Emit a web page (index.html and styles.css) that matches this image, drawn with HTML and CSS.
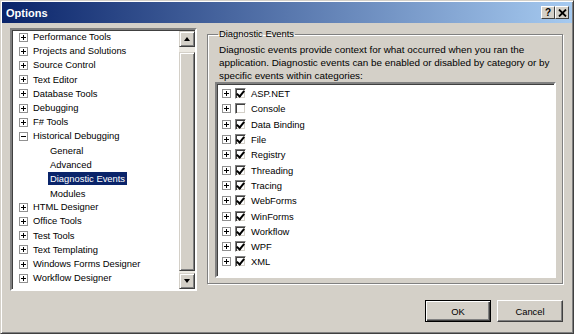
FILE: index.html
```html
<!DOCTYPE html>
<html lang="en">
<head>
    <meta charset="UTF-8">
    <title>Options</title>
    <link rel="stylesheet" href="styles.css">
</head>
<body>
<div class="window">
    <div class="titlebar">
        <span class="title">Options</span>
        <div class="caption-btns">
            <span class="cap-btn">?</span>
            <span class="cap-btn">
                <svg width="9" height="8" viewBox="0 0 9 8"><path d="M1 0.5 L8 7.5 M8 0.5 L1 7.5" stroke="#000" stroke-width="1.8"/></svg>
            </span>
        </div>
    </div>

    <div class="main">
        <div class="tree">
            <ul class="tree-items">
                <li><span class="exp"></span>Performance Tools</li>
                <li><span class="exp"></span>Projects and Solutions</li>
                <li><span class="exp"></span>Source Control</li>
                <li><span class="exp"></span>Text Editor</li>
                <li><span class="exp"></span>Database Tools</li>
                <li><span class="exp"></span>Debugging</li>
                <li><span class="exp"></span>F# Tools</li>
                <li><span class="exp open"></span>Historical Debugging</li>
                <li class="child"><span>General</span></li>
                <li class="child"><span>Advanced</span></li>
                <li class="child"><span class="selected">Diagnostic Events</span></li>
                <li class="child"><span>Modules</span></li>
                <li><span class="exp"></span>HTML Designer</li>
                <li><span class="exp"></span>Office Tools</li>
                <li><span class="exp"></span>Test Tools</li>
                <li><span class="exp"></span>Text Templating</li>
                <li><span class="exp"></span>Windows Forms Designer</li>
                <li><span class="exp"></span>Workflow Designer</li>
            </ul>
            <div class="scrollbar">
                <div class="sb-btn"><span class="arrow up"></span></div>
                <div class="sb-track"><div class="sb-thumb"></div></div>
                <div class="sb-btn"><span class="arrow down"></span></div>
            </div>
        </div>

        <fieldset class="group">
            <legend>Diagnostic Events</legend>
            <p class="desc">Diagnostic events provide context for what occurred when you ran the application. Diagnostic events can be enabled or disabled by category or by specific events within categories:</p>
            <ul class="events">
                <li><span class="exp"></span><span class="chk on"></span>ASP.NET</li>
                <li><span class="exp"></span><span class="chk"></span>Console</li>
                <li><span class="exp"></span><span class="chk on"></span>Data Binding</li>
                <li><span class="exp"></span><span class="chk on"></span>File</li>
                <li><span class="exp"></span><span class="chk on"></span>Registry</li>
                <li><span class="exp"></span><span class="chk on"></span>Threading</li>
                <li><span class="exp"></span><span class="chk on"></span>Tracing</li>
                <li><span class="exp"></span><span class="chk on"></span>WebForms</li>
                <li><span class="exp"></span><span class="chk on"></span>WinForms</li>
                <li><span class="exp"></span><span class="chk on"></span>Workflow</li>
                <li><span class="exp"></span><span class="chk on"></span>WPF</li>
                <li><span class="exp"></span><span class="chk on"></span>XML</li>
            </ul>
        </fieldset>
    </div>

    <div class="footer">
        <button class="btn default">OK</button>
        <button class="btn">Cancel</button>
    </div>
</div>
</body>
</html>
```

FILE: styles.css
```css
*{
    margin: 0;
    padding: 0;
    box-sizing: border-box;
}

body{
    background: #fff;
    font-family: "Liberation Sans", Arial, sans-serif;
    font-size: 9.4px;
    color: #000;
}

.window{
    width: 574px;
    height: 334px;
    background: #d4d0c8;
    border: 1px solid #d4d0c8;
    border-right-color: #404040;
    border-bottom-color: #404040;
    box-shadow: inset 1px 1px 0 #fff, inset -1px -1px 0 #808080;
    display: flex;
    flex-direction: column;
}

/* title bar */
.titlebar{
    height: 21px;
    margin: 1px 1px 0 1px;
    background: linear-gradient(to right, #0a246a, #a6caf0);
    display: flex;
    align-items: center;
    justify-content: space-between;
    padding: 0 3px 0 4px;
}
.title{
    color: #fff;
    font-weight: bold;
    font-size: 11px;
}
.caption-btns{
    display: flex;
}
.cap-btn{
    width: 14px;
    height: 13px;
    background: #d4d0c8;
    border: 1px solid;
    border-color: #fff #404040 #404040 #fff;
    font-weight: bold;
    font-size: 10px;
    display: flex;
    align-items: center;
    justify-content: center;
    line-height: 1;
}

/* main area */
.main{
    display: flex;
    padding: 5px 0 0 9px;
    height: 268px;
}

.tree{
    width: 187px;
    height: 263px;
    background: #fff;
    border: 2px solid;
    border-color: #808080 #fff #fff #808080;
    box-shadow: inset 1px 1px 0 #404040;
    display: flex;
}
.tree-items{
    list-style: none;
    flex: 1;
    padding: 0 0 0 7px;
}
.tree-items li{
    height: 14.2px;
    line-height: 14.2px;
    display: flex;
    align-items: center;
    white-space: nowrap;
}
.tree-items li.child{
    padding-left: 29px;
}
.tree-items li.child span{
    padding: 0 2px;
    line-height: 13px;
}
.tree-items .selected{
    background: #0a246a;
    color: #fff;
}

/* expander box */
.exp{
    width: 9px;
    height: 9px;
    border: 1px solid #919191;
    background: #fff;
    position: relative;
    margin-right: 5px;
    flex: none;
}
.exp::before{
    content: "";
    position: absolute;
    left: 1px;
    top: 3px;
    width: 5px;
    height: 1px;
    background: #000;
}
.exp::after{
    content: "";
    position: absolute;
    left: 3px;
    top: 1px;
    width: 1px;
    height: 5px;
    background: #000;
}
.exp.open::after{
    display: none;
}

/* scrollbar */
.scrollbar{
    width: 16px;
    display: flex;
    flex-direction: column;
    background: #ece9e2;
    margin-top: 1px;
}
.sb-btn, .sb-thumb{
    background: #d4d0c8;
    border: 1px solid;
    border-color: #d4d0c8 #404040 #404040 #d4d0c8;
    box-shadow: inset 1px 1px 0 #fff, inset -1px -1px 0 #808080;
}
.sb-btn{
    height: 16px;
    display: flex;
    align-items: center;
    justify-content: center;
}
.sb-track{
    flex: 1;
    padding: 5px 0 2px 0;
    display: flex;
}
.sb-thumb{
    flex: 1;
}
.arrow{
    width: 0;
    height: 0;
    border-left: 3.5px solid transparent;
    border-right: 3.5px solid transparent;
}
.arrow.up{
    border-bottom: 4px solid #000;
}
.arrow.down{
    border-top: 4px solid #000;
}

/* group box */
.group{
    margin-left: 10px;
    width: 356px;
    height: 256px;
    border: 1px solid #808080;
    box-shadow: 1px 1px 0 #fff, inset 1px 1px 0 #fff;
    padding: 0 6px 0 8px;
}
.group legend{
    padding: 0 1px;
    margin-left: 2px;
    line-height: 12px;
}
.desc{
    font-size: 9.9px;
    line-height: 13px;
    margin-top: 3px;
    padding: 0 2px 0 3px;
}
.events{
    list-style: none;
    background: #fff;
    margin: 0 0 0 -1px;
    height: 196px;
    border: 2px solid;
    border-color: #808080 #fff #fff #808080;
    box-shadow: inset 1px 1px 0 #404040;
    padding: 2px 0 0 5px;
}
.events li{
    height: 15.3px;
    display: flex;
    align-items: center;
    white-space: nowrap;
}
.events .exp{
    margin-right: 4px;
}
.chk{
    width: 11px;
    height: 11px;
    border: 1px solid;
    border-color: #808080 #fff #fff #808080;
    box-shadow: inset 1px 1px 0 #404040, inset -1px -1px 0 #d4d0c8;
    background: #fff;
    margin-right: 5px;
    position: relative;
    flex: none;
}
.chk.on::after{
    content: "";
    position: absolute;
    left: 2px;
    top: 0px;
    width: 3px;
    height: 6px;
    border-right: 2px solid #000;
    border-bottom: 2px solid #000;
    transform: rotate(40deg);
}

/* buttons */
.footer{
    display: flex;
    justify-content: flex-end;
    gap: 6px;
    padding: 9px 10px 0 0;
}
.btn{
    width: 66px;
    height: 22px;
    font-family: "Liberation Sans", Arial, sans-serif;
    font-size: 9.4px;
    background: #d4d0c8;
    border: 1px solid;
    border-color: #fff #404040 #404040 #fff;
    box-shadow: inset -1px -1px 0 #808080;
}
.btn.default{
    border: 1px solid #000;
    box-shadow: inset 1px 1px 0 #fff, inset -1px -1px 0 #404040, inset -2px -2px 0 #808080;
}
```
